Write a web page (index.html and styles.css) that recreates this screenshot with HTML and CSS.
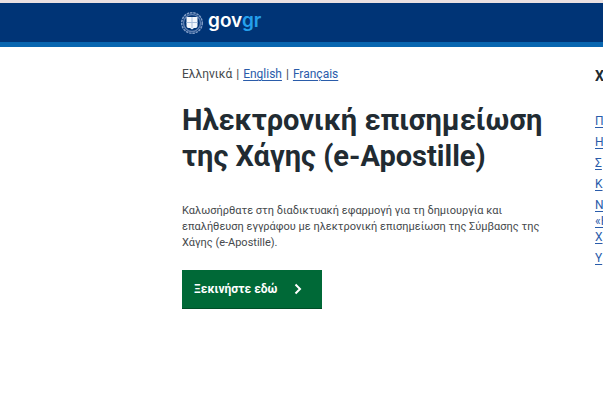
FILE: index.html
```html
<!DOCTYPE html>
<html lang="el">
<head>
<meta charset="utf-8">
<title>e-Apostille</title>
<link rel="stylesheet" href="styles.css">
</head>
<body>
<header class="header">
  <svg class="emblem" viewBox="0 0 24 24" aria-hidden="true">
    <g fill="none" stroke="#7f9cc6">
      <circle cx="12" cy="12" r="10.3" stroke-width="1.5" stroke-dasharray="2.500 .8"/>
      <circle cx="12" cy="12" r="8.5" stroke="#5b7db0" stroke-width="1.500"/>
    </g>
    <path d="M6.500 6h11v9q0 2-2 2h-1.500l-2 1.500l-2-1.500h-1.500q-2 0-2-2z" fill="#f2f6fc"/>
    <path d="M12 6v11M6.500 11.500h11" stroke="#a9bedb" stroke-width="1" fill="none"/>
  </svg>
  <span class="brand">gov<span class="brand-gr">gr</span></span>
</header>
<div class="page">
  <main class="content">
    <nav class="languages">
      <span>Ελληνικά</span><span>|</span><a href="#en">English</a><span>|</span><a href="#fr">Français</a>
    </nav>
    <h1 class="title">Ηλεκτρονική επισημείωση της Χάγης (e-Apostille)</h1>
    <p class="intro">Καλωσήρθατε στη διαδικτυακή εφαρμογή για τη δημιουργία και επαλήθευση εγγράφου με ηλεκτρονική επισημείωση της Σύμβασης της Χάγης (e-Apostille).</p>
    <button class="start" type="button">Ξεκινήστε εδώ
      <svg class="chevron" viewBox="0 0 8 12" aria-hidden="true"><path d="M1.5 1.5L6 6l-4.500 4.500" fill="none" stroke="currentColor" stroke-width="2"/></svg>
    </button>
  </main>
  <aside class="sidebar">
    <h2 class="side-title">Χ</h2>
    <ul class="links">
      <li><a href="#1">Π</a></li>
      <li><a href="#2">Η</a></li>
      <li><a href="#3">Σ</a></li>
      <li><a href="#4">Κ</a></li>
      <li><a href="#5">Ν<br>«Η<br>Χ</a></li>
      <li><a href="#6">Υ</a></li>
    </ul>
  </aside>
</div>
</body>
</html>
```
FILE: styles.css
```css
* { box-sizing: border-box; }
body {
  margin: 0;
  overflow-x: hidden;
  background: #fff;
  color: #45494c;
  font: 12px/16px Roboto, "Liberation Sans", sans-serif;
}
a { color: #2a5caa; text-decoration: underline; text-underline-offset: 2px; }
.header {
  display: flex;
  align-items: center;
  gap: 4px;
  height: 47px;
  padding-left: 180px;
  background: #003476;
  border-top: 3px solid #e9e0e1;
  border-bottom: 5px solid #0866b0;
}
.emblem { width: 24px; height: 24px; }
.brand {
  padding-bottom: 4px;
  color: #fff;
  font: 600 19px/24px Inter, sans-serif;
}
.brand-gr { color: #25a0ec; }
.page {
  display: grid;
  grid-template-columns: minmax(0, 1fr) 8px;
  column-gap: 36px;
  padding: 19px 0 0 182px;
}
.languages { display: flex; gap: 4px; }
.title {
  margin: 20px 0 29px;
  color: #212b32;
  font-size: 29px;
  line-height: 36px;
}
.intro { margin: 0 0 19px; font-size: 11px; }
.start {
  display: flex;
  align-items: center;
  justify-content: space-between;
  width: 140px;
  height: 39px;
  padding: 0 20px 0 12px;
  border: 0;
  border-bottom: 1px solid #004d26;
  background: #006937;
  color: #fff;
  font: 700 12px/16px Roboto, sans-serif;
}
.chevron { width: 8px; height: 12px; }
.sidebar { overflow: hidden; white-space: nowrap; }
.side-title { margin: 0 0 27px; color: #212b32; font-size: 14px; line-height: 20px; }
.links {
  display: grid;
  gap: 5px;
  margin: 0;
  padding: 0;
  list-style: none;
}
```
